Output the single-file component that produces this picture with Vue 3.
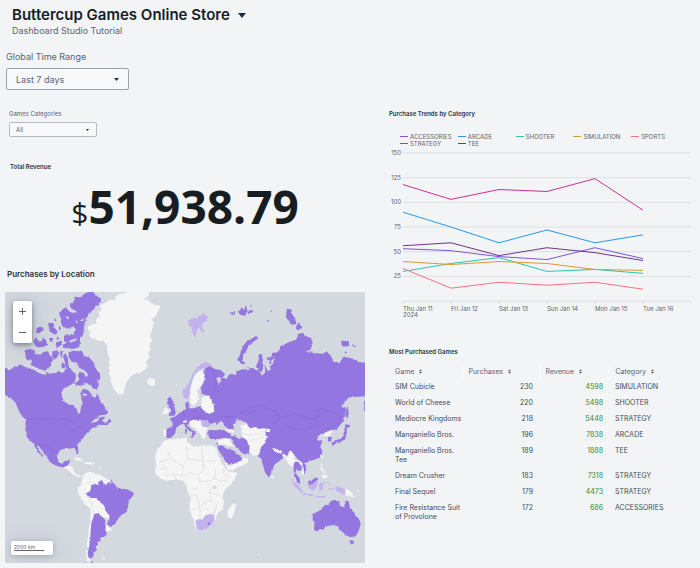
<script setup>
import { ref } from 'vue'

const timeRange = ref('Last 7 days')
const category = ref('All')

const days = ['Thu Jan 11', 'Fri Jan 12', 'Sat Jan 13', 'Sun Jan 14', 'Mon Jan 15', 'Tue Jan 16']
const ticks = [150, 125, 100, 75, 50, 25]
const series = [
  { name: 'ACCESSORIES', color: '#7b56db', values: [53, 51, 45, 42, 54, 43] },
  { name: 'ARCADE', color: '#2a97e8', values: [90, 75, 59, 72, 59, 67] },
  { name: 'SHOOTER', color: '#2cc7a6', values: [30, 38, 44, 30, 32, 28] },
  { name: 'SIMULATION', color: '#dc9a30', values: [40, 37, 40, 38, 32, 31] },
  { name: 'SPORTS', color: '#fa6f7f', values: [33, 13, 19, 16, 19, 12] },
  { name: 'STRATEGY', color: '#cb2e9a', values: [118, 103, 113, 111, 124, 92] },
  { name: 'TEE', color: '#73308c', values: [56, 59, 46, 54, 49, 41] }
]
const px = (i) => 14 + i * 48
const py = (v) => 152 - (v * 148) / 150
const line = (values) => values.map((v, i) => `${px(i)},${py(v)}`).join(' ')

const columns = ['Game', 'Purchases', 'Revenue', 'Category']
const games = [
  ['SIM Cubicle', 230, 4598, 'SIMULATION'],
  ['World of Cheese', 220, 5498, 'SHOOTER'],
  ['Mediocre Kingdoms', 218, 5448, 'STRATEGY'],
  ['Manganiello Bros.', 196, 7838, 'ARCADE'],
  ['Manganiello Bros. Tee', 189, 1888, 'TEE'],
  ['Dream Crusher', 183, 7318, 'STRATEGY'],
  ['Final Sequel', 179, 4473, 'STRATEGY'],
  ['Fire Resistance Suit of Provolone', 172, 686, 'ACCESSORIES']
]
</script>

<template>
  <div class="dashboard">
    <header class="head">
      <h1>
        Buttercup Games Online Store
        <button class="title-menu" aria-label="Switch dashboard">
          <svg viewBox="0 0 8 5"><path d="M0 0h8L4 5z" /></svg>
        </button>
      </h1>
      <p>Dashboard Studio Tutorial</p>
    </header>

    <div class="field">
      <label for="time-range">Global Time Range</label>
      <div class="select-box">
        <select id="time-range" v-model="timeRange">
          <option>Last 7 days</option>
        </select>
        <svg class="caret" viewBox="0 0 8 5"><path d="M0 0h8L4 5z" /></svg>
      </div>
    </div>

    <main class="columns">
      <div class="left">
        <div class="field small">
          <label for="category">Games Categories</label>
          <div class="select-box">
            <select id="category" v-model="category">
              <option>All</option>
            </select>
            <svg class="caret" viewBox="0 0 8 5"><path d="M0 0h8L4 5z" /></svg>
          </div>
        </div>

        <section class="revenue">
          <h2>Total Revenue</h2>
          <p class="amount"><span>$</span>51,938.79</p>
        </section>

        <section class="location">
          <h2>Purchases by Location</h2>
          <div class="map">
            <svg class="world" viewBox="0 0 1080 813" role="img" aria-label="World map of purchases">
              <defs>
                <filter id="coast" x="0" y="0" width="100%" height="100%" color-interpolation-filters="sRGB">
                  <feTurbulence type="fractalNoise" baseFrequency="0.12" numOctaves="2" seed="4" />
                  <feDisplacementMap in="SourceGraphic" scale="8" xChannelSelector="R" yChannelSelector="G" />
                </filter>
              </defs>
              <rect class="sea" width="1080" height="813" />
              <g filter="url(#coast)">
                <rect class="sea" x="-20" y="-20" width="1120" height="853" />
                <!-- North America and Greenland -->
                <g transform="translate(-15 -18)">
                  <path class="none" d="M300 57L318 50 326 42 344 43 348 30 362 24 385 18 398 10 445 10 448 22 444 32 432 42 446 42 453 52 468 54 482 62 474 75 466 92 454 98 462 112 456 135 450 150 455 163 448 178 452 190 444 202 450 213 437 228 444 240 430 254 418 260 400 264 386 280 378 292 373 316 365 328 353 323 342 308 333 290 331 272 326 262 330 248 326 230 329 215 323 200 320 180 312 166 290 162 272 155 266 144 275 140 262 128 268 118 292 112 284 104 300 90 296 78 306 70z" />
                  <path class="none" d="M440 284L450 276 464 280 474 278 479 288 468 297 456 301 446 294 440 291z" />
                  <path class="full" d="M-20 246L20 246 30 252 42 243 62 237 75 243 95 248 110 255 118 262 135 266 140 258 150 262 165 262 178 255 184 261 192 258 198 245 194 228 190 210 196 200 204 218 206 242 220 258 228 268 226 284 214 296 192 306 184 322 190 345 205 355 222 358 230 370 235 383 241 378 243 362 248 350 243 335 243 318 250 308 262 312 270 318 275 330 287 335 291 322 297 332 303 350 315 362 325 380 318 386 300 388 285 398 270 412 290 408 305 392 316 394 306 404 318 412 328 398 335 406 318 418 298 416 288 424 276 425 266 440 77 440 77 402 66 390 55 372 47 350 35 338 15 326 -20 322z" />
                  <path class="full" d="M205 200L214 194 236 195 248 198 252 210 266 214 280 228 285 244 303 268 298 284 291 278 297 295 290 312 280 306 272 297 262 292 254 292 240 300 228 300 222 290 238 282 233 268 240 256 250 262 258 272 264 264 252 252 238 246 232 230 216 228 206 216z" />
                  <path class="full" d="M258 20L280 17 290 30 304 38 300 50 290 58 280 72 268 80 258 100 252 120 250 145 240 160 238 183 222 188 190 186 188 176 200 170 192 162 192 150 202 145 220 148 228 130 220 122 202 128 188 122 182 108 184 98 178 86 184 72 198 64 206 76 220 82 232 78 218 70 206 60 222 44 224 32 240 34z" />
                  <path class="full" d="M76 192L92 188 108 196 98 212 88 224 77 218zM88 215L104 204 122 206 130 198 144 196 150 210 160 218 154 232 146 246 136 254 120 250 104 242 92 236 96 224zM158 196L170 192 178 200 172 214 162 222 156 210zM182 192L188 196 186 214 180 206zM186 228L196 236 194 248 184 244zM100 160L110 155 114 166 126 166 128 154 138 162 142 178 128 183 112 184 104 177zM148 156L160 156 158 168 149 166zM166 170L182 164 186 176 170 186zM110 126L128 120 130 132 118 142 108 140zM144 112L160 110 162 124 174 138 166 146 150 138zM164 95L170 104 164 106zM178 118L184 130 176 132zM172 150L178 160 170 162z" />
                  <path class="sea" d="M228 102L236 108 228 112zM196 90L208 94 202 100zM252 96L240 104 250 106zM208 164L232 156 228 164 210 170zM168 255L176 248 172 240zM248 322L262 325 258 330 248 328z" />
                  <path class="border" d="M77 398L205 398 226 410 235 424 255 418 280 400 300 394" />
                </g>
                <!-- United States, Mexico, Central and South America -->
                <g transform="translate(-15 402)">
                  <path class="full" d="M77 -10L290 -10 290 2 275 5 262 17 255 30 245 42 232 55 235 72 234 86 229 83 225 70 215 66 200 68 185 70 175 78 172 92 175 108 188 114 195 104 212 100 208 112 200 118 192 124 178 122 160 115 146 105 140 90 128 78 120 65 110 54 114 68 122 80 130 94 124 90 110 72 102 55 95 48 82 35 77 20z" />
                  <path class="border" d="M102 52L125 60 140 55 155 70 172 82M207 10L220 14 235 4 250 0" />
                  <path class="none" d="M192 124L204 119 218 122 220 136 230 146 240 148 244 154 234 152 218 144 206 134zM219 98L232 94 248 102 252 107 238 104zM254 109L270 108 286 112 276 116 256 114zM296 118L302 126 300 130z" />
                  <path class="none" d="M248 152L258 140 272 137 292 144 308 150 320 160 340 165 345 180 340 260 326 280 290 266 282 272 274 300 270 330 266 360 263 384 270 398 277 412 264 405 258 390 262 340 270 290 272 248 256 236 242 212 234 200 234 188 244 176z" />
                  <path class="full" d="M274 178L286 174 296 178 294 168 306 162 312 174 330 170 334 160 344 176 348 182 364 188 382 190 398 198 401 208 388 222 384 242 380 258 362 268 350 286 334 306 320 294 328 284 328 268 318 258 314 240 300 228 286 216 272 216 262 210 260 202 272 192z" />
                  <path class="full" d="M284 262L296 263 316 282 316 296 320 318 318 330 300 336 302 344 292 348 294 356 286 362 290 374 280 380 280 392 270 398 262 388 266 368 270 350 272 320 274 292zM272 402L281 412 274 412z" />
                  <path class="none" d="M318 296L334 308 328 316 316 314zM305 397L315 398 312 402z" />
                  <path class="edge" d="M270 150L268 168 290 172M255 190L250 200 270 222 274 240M276 225L280 262M338 166L328 174" />
                </g>
                <!-- Northern Eurasia -->
                <g transform="translate(525 -18)">
                  <path class="full" d="M80 242L92 240 100 248 122 252 135 264 130 276 114 274 106 280 116 294 124 286 120 278 132 276 140 280 145 268 158 262 168 268 170 256 188 250 206 252 216 246 228 252 240 254 242 268 250 268 256 256 254 240 262 216 274 212 278 200 296 198 302 180 330 168 350 160 354 144 366 140 376 150 394 156 398 170 392 190 378 198 400 200 430 204 440 196 454 212 460 228 480 228 492 212 520 218 535 228 590 234 590 330 530 332 508 334 498 344 484 360 498 368 496 390 486 410 470 430 410 440 215 440 200 410 172 400 150 436 120 400 60 390 70 370 90 330 66 320 62 305 72 288 76 270 70 255z" />
                  <path class="full" d="M228 150L236 156 222 166 208 176 200 192 190 206 188 222 194 234 184 234 172 222 180 206 184 188 196 170 212 160zM236 206L246 204 248 222 250 240 246 258 236 254 228 240 236 222zM196 240L218 248 232 262 220 254zM320 70L334 70 336 84 344 96 348 114 334 116 326 104 318 94zM352 108L366 122 364 130 348 130zM484 164L506 166 508 180 490 182 484 176zM516 174L530 180 522 184zM492 194L504 200 496 202zM552 346L590 340 590 384 554 380z" />
                  <path class="full" d="M150 80L166 78 162 88 152 84zM174 76L186 64 192 72 198 56 202 74 196 90 180 86zM206 74L220 72 218 80 204 82zM262 102h5v4h-5zM272 74h6v4h-6zM210 58h5v5h-5z" />
                  <path class="sea" d="M254 232L264 220 272 226 284 216 280 232 270 240 272 252 262 254z" />
                  <path class="full" d="M266 226L276 228 270 236z" />
                  <path class="some" d="M26 102L40 94 50 98 54 88 70 84 84 94 78 106 68 112 66 126 74 134 66 142 58 124 50 134 46 156 38 140 34 124 26 118z" />
                </g>
                <!-- Africa -->
                <g transform="translate(525 402)">
                  <path class="none" d="M-75 94L-68 72 -56 56 -42 40 0 36 20 34 22 48 36 60 56 64 72 56 94 60 108 64 114 88 124 108 134 124 142 136 170 140 166 156 150 178 134 192 128 210 132 230 128 250 112 262 110 274 100 290 76 310 56 314 46 304 42 284 32 262 28 236 34 216 22 194 20 180 10 164 -10 160 -40 164 -58 158 -75 140 -72 110z" />
                  <path class="none" d="M164 228L168 238 162 260 154 278 144 272 142 252 152 240z" />
                  <path class="edge" d="M-60 110L-30 96 -36 76M-30 96L8 120 24 100 20 56M24 100L68 104 66 64M68 104L72 132 54 148 30 140 8 152 -20 142 -40 150M68 104L110 104M108 124L104 158 124 166 144 162M54 148L60 168 90 164 104 158M34 190L60 186 62 166M32 206L50 206 56 230 60 244 44 248 30 248M60 244L78 226 92 222 90 200 88 172M90 200L112 206 128 214M92 222L110 234 106 260 92 262 76 246M60 244L60 276M-20 142L-10 160M8 120L6 152M-40 126L-60 128M-50 114L-40 126-42 150M134 126L128 140 150 156" />
                  <path class="some" d="M46 286L60 278 66 282 76 268 90 264 102 264 104 278 98 292 80 310 56 314 50 304z" />
                  <path class="full" d="M82 292L90 288 90 296 84 297z" />
                  <path class="sea" d="M98 178L110 180 108 190 98 190z" />
                </g>
                <!-- Europe and the Middle East -->
                <g transform="translate(450 207)">
                  <path class="sea" d="M0 -5L60 -5 80 70 80 100 138 100 140 160 200 175 222 206 236 212 160 236 152 250 130 244 112 252 98 240 96 230 60 234 30 238 0 190z" />
                  <path class="some" d="M82 90L90 80 102 66 112 42 122 22 138 8 152 4 168 8 172 16 150 20 130 28 120 40 112 62 108 80 104 104 98 114 86 110z" />
                  <path class="none" d="M106 118L104 96 108 74 114 54 126 36 140 28 150 44 144 62 134 80 126 92 132 104 126 122 116 136 108 130z" />
                  <path class="full" d="M148 26L162 16 176 22 186 60 176 96 158 104 140 98 140 82 152 68z" />
                  <path class="none" d="M142 108L160 104 168 116 176 134 178 152 160 160 144 152 138 136z" />
                  <path class="full" d="M36 112L48 108 54 122 60 142 66 156 58 164 40 164 48 152 44 140 38 130zM58 168L74 156 84 150 94 144 90 128 98 120 104 132 100 142 114 142 134 136 148 150 164 160 176 156 206 158 244 156 240 186 236 206 224 206 208 194 204 184 196 180 188 192 180 184 168 190 156 180 132 176 114 176 102 184 96 192 110 206 124 216 118 222 110 226 112 214 92 200 86 188 74 192 64 200 60 218 48 230 36 232 32 222 34 202 54 198 52 184 44 174 52 170z" />
                  <path class="none" d="M24 146L36 140 42 150 36 160 24 158zM26 204L34 204 34 226 27 226zM84 180L94 178 96 184 84 186zM108 178L136 178 152 196 158 206 152 216 152 230 142 232 136 218 122 204 106 192 102 184z" />
                  <path class="some" d="M136 180L154 178 168 188 162 198 144 198z" />
                  <path class="full" d="M90 204L96 204 96 216 90 220zM104 226L116 226 112 232zM76 214L82 214 80 218zM156 218L162 206 180 208 208 206 226 212 228 224 216 232 184 234 168 234z" />
                  <path class="none" d="M208 206L232 204 240 214 228 218zM188 238L206 232 222 232 228 246 238 258 226 256 206 250 194 254z" />
                  <path class="sea" d="M264 268L290 280 262 296 240 284z" />
                  <path class="full" d="M222 226L240 226 252 234 268 228 280 234 286 252 286 278 268 280 258 272 244 260 234 244z" />
                  <path class="full" d="M186 256L200 252 216 264 238 268 244 280 258 284 262 296 244 306 222 312 212 302 202 286 192 270zM186 246L190 246 188 256z" />
                  <path class="none" d="M212 304L228 314 246 304 262 298 264 286 278 292 280 304 262 314 232 328 216 326z" />
                  <path class="border" d="M84 150L88 168M116 146L120 168 148 170M60 198L46 196M200 166L240 168 256 154 280 158 300 150M172 20L180 50 178 90" />
                </g>
                <!-- South and East Asia -->
                <g transform="translate(690 297)">
                  <path class="full" d="M50 100L320 60 324 84 300 112 284 118 262 128 248 134 246 146 262 150 256 166 262 184 254 200 234 208 216 212 206 216 190 206 176 190 160 192 146 200 138 206 120 220 110 236 108 254 100 258 90 244 82 216 80 204 68 196 74 176 90 150z" />
                  <path class="none" d="M14 118L18 102 34 100 46 112 62 108 72 114 84 112 106 114 104 122 90 124 96 140 88 156 78 168 72 192 54 194 42 186 44 166 34 146 16 136z" />
                  <path class="sea" d="M-4 100L8 94 12 108 22 112 18 122 22 134 14 140 6 126 -4 116z" />
                  <path class="edge" d="M44 150L62 144 86 138M18 124L44 134 62 128 88 134M64 186L80 164" />
                  <path class="none" d="M110 170L124 176 142 182 140 188 120 182zM142 190L152 190 154 204 144 202zM108 252L116 256 116 264 110 262zM160 188L168 178 176 190 182 208 178 222 170 228 162 220 152 206zM184 206L194 210 208 226 216 236 206 252 198 248 202 238 194 226z" />
                  <path class="full" d="M176 218L188 212 200 226 200 238 188 240 184 232 182 246 194 262 196 280 186 272 180 256 176 240zM204 212L212 222 214 238 208 250 206 236 202 224zM216 206L222 210 218 216z" />
                  <path class="none" d="M262 132L280 122 292 118 292 124 282 134 276 138zM256 190L262 194 260 204 256 202zM258 216L266 222 262 232 270 244 264 246 256 234zM262 252L276 248 276 262 264 262z" />
                  <path class="full" d="M278 138L288 138 290 150 280 152zM290 156L300 148 316 144 322 136 328 122 328 112 334 108 336 124 330 144 316 154 300 158 292 166zM330 100L346 102 342 110 330 110zM336 44L342 60 338 84 332 74z" />
                  <path class="some" d="M164 262L178 272 196 288 204 304 196 302 178 286zM200 306L222 308 240 312 236 316 206 312zM242 314L272 316 272 320 244 319zM218 276L228 276 248 264 246 290 236 298 220 292zM252 282L258 276 272 274 262 284 266 300 258 294 254 304zM278 278L284 272 284 284zM280 292L296 292 294 296 282 296zM300 284L312 288 330 294 332 312 320 308 302 298z" />
                  <path class="full" d="M218 274L230 268 244 258 250 264 236 276 226 282z" />
                  <path class="none" d="M332 294L348 302 356 316 366 320 352 318 340 314 332 312zM362 298L370 296 372 304z" />
                  <path class="border" d="M-30 84L0 76 20 66 50 48 80 44 104 54 120 62 134 80 156 74 180 70 200 76 230 84 250 76 246 56 264 54 290 60 312 76 320 90M134 80L150 104 180 114 210 118 240 104 250 76M104 114L120 96 134 80" />
                </g>
                <!-- Oceania -->
                <g transform="translate(525 402)">
                  <path class="full" d="M398 264L410 258 424 252 430 240 446 234 452 226 464 222 478 226 478 238 492 246 498 222 506 228 510 246 520 254 526 268 538 280 542 294 536 314 528 330 512 334 496 328 488 316 478 312 474 300 456 298 440 300 428 310 408 316 402 308 404 292 398 282z" />
                  <path class="border" d="M400 278L420 284 450 294" />
                  <path class="full" d="M508 342L522 344 520 354 512 355z" />
                  <path class="none" d="M234 384h5v4h-5z" />
                </g>
              </g>
            </svg>
            <div class="zoom">
              <button aria-label="Zoom in"><svg viewBox="0 0 8 8"><path d="M4 0v8M0 4h8" /></svg></button>
              <button aria-label="Zoom out"><svg viewBox="0 0 8 8"><path d="M0 4h8" /></svg></button>
            </div>
            <div class="scale"><span>2000 km</span></div>
          </div>
        </section>
      </div>

      <div class="right">
        <section>
          <h2>Purchase Trends by Category</h2>
          <ul class="legend">
            <li v-for="s in series" :key="s.name">
              <i :style="{ background: s.color }"></i>{{ s.name }}
            </li>
          </ul>
          <svg class="chart" viewBox="0 0 302 172" role="img" aria-label="Purchase trends">
            <g v-for="t in ticks" :key="t">
              <line class="grid" x1="14" x2="302" :y1="py(t)" :y2="py(t)" />
              <text x="12" :y="py(t) + 2" text-anchor="end">{{ t }}</text>
            </g>
            <path class="grid" d="M14 152H302M14 152v3M62 152v3M110 152v3M158 152v3M206 152v3M254 152v3M302 152v3" />
            <text v-for="(d, i) in days" :key="d" :x="px(i)" y="162">{{ d }}</text>
            <text x="14" y="168">2024</text>
            <polyline v-for="s in series" :key="s.name" :points="line(s.values)" :stroke="s.color" />
          </svg>
        </section>

        <section class="games">
          <h2>Most Purchased Games</h2>
          <table>
            <thead>
              <tr>
                <th v-for="c in columns" :key="c">
                  {{ c }}
                  <svg viewBox="0 0 4 6"><path d="M2 0l2 2.500H0zM2 6l2-2.500H0z" /></svg>
                </th>
              </tr>
            </thead>
            <tbody>
              <tr v-for="g in games" :key="g[0]">
                <td>{{ g[0] }}</td>
                <td class="num">{{ g[1] }}</td>
                <td class="num money">{{ g[2] }}</td>
                <td>{{ g[3] }}</td>
              </tr>
            </tbody>
          </table>
        </section>
      </div>
    </main>
  </div>
</template>

<style>
body {
  margin: 0;
  background: #f2f4f6;
}
</style>

<style scoped>
.dashboard {
  padding: 5px 9px 5px 5px;
  font-family: Inter, 'Liberation Sans', sans-serif;
  color: #5c6370;
}
h1, h2, p, ul {
  margin: 0;
  padding: 0;
}
button {
  border: 0;
  padding: 0;
  background: none;
}
.head {
  padding-left: 7px;
}
h1 {
  display: flex;
  align-items: center;
  gap: 8px;
  font-size: 15px;
  line-height: 20px;
  font-weight: 600;
  color: #171d29;
}
.title-menu {
  display: flex;
}
.title-menu svg {
  width: 8px;
  height: 5px;
  fill: #1c2b3a;
}
.head p {
  font-size: 9px;
  line-height: 12px;
}
.field {
  margin-top: 14px;
  padding-left: 1px;
}
.field label {
  display: block;
  font-size: 9px;
  line-height: 12px;
}
.select-box {
  display: flex;
  align-items: center;
  width: 123px;
  margin-top: 5px;
}
select {
  appearance: none;
  width: 100%;
  height: 22px;
  padding: 0 9px;
  border: 1px solid #9ba3b1;
  border-radius: 2px;
  background: #f7f8fa;
  font-family: inherit;
  font-size: 9px;
  color: #5c6370;
}
.caret {
  width: 5px;
  height: 3px;
  margin-left: -15px;
  flex: none;
  fill: #1c2b3a;
  pointer-events: none;
}
.columns {
  display: grid;
  grid-template-columns: 360fr 302fr;
  gap: 24px;
  padding-top: 18px;
}
.small {
  margin-top: 2px;
  padding-left: 4px;
}
.small label {
  font-size: 6px;
  line-height: 8px;
}
.small .select-box {
  width: 88px;
  margin-top: 4px;
}
.small select {
  height: 15px;
  padding: 0 6px;
  border-color: #b5bac2;
  font-size: 6px;
}
.small .caret {
  width: 3px;
  height: 2px;
  margin-left: -11px;
}
h2 {
  font-size: 7px;
  line-height: 12px;
  font-weight: 600;
  color: #2c333f;
}
.right h2 {
  font-size: 6px;
}
.revenue {
  padding-top: 24px;
}
.revenue h2 {
  padding-left: 5px;
  font-size: 6px;
}
.amount {
  padding-top: 3px;
  text-align: center;
  font-family: 'Open Sans', sans-serif;
  font-size: 46px;
  line-height: 60px;
  font-weight: 700;
  color: #171d21;
}
.amount span {
  font-size: 30px;
  font-weight: 400;
}
.location {
  padding-top: 24px;
}
.location h2 {
  padding-left: 2px;
  font-size: 8px;
  line-height: 14px;
}
.map {
  position: relative;
  margin-top: 11px;
  overflow: hidden;
}
.world {
  display: block;
  width: 100%;
}
.sea { fill: #d4d9e0; }
.full { fill: #9476e0; }
.some { fill: #c3b3ec; }
.none { fill: #f5f5f6; }
.border, .edge {
  fill: none;
  stroke: #8569d4;
  stroke-width: 2;
}
.edge {
  stroke: #e1e3e6;
  stroke-width: 3;
}
.zoom {
  position: absolute;
  left: 8px;
  top: 9px;
  display: flex;
  flex-direction: column;
  border-radius: 2px;
  background: #fff;
  box-shadow: 0 2px 5px rgba(40, 50, 65, 0.5), 0 2px 24px rgba(40, 50, 65, 0.2);
}
.zoom button {
  display: flex;
  align-items: center;
  justify-content: center;
  width: 19px;
  height: 21px;
}
.zoom svg {
  width: 7px;
  height: 7px;
  fill: none;
  stroke: #4a505a;
}
.scale {
  position: absolute;
  left: 6px;
  bottom: 8px;
  width: 42px;
  padding: 3px 3px 4px;
  box-sizing: border-box;
  border-radius: 2px;
  background: #fff;
  box-shadow: 0 1px 5px rgba(40, 50, 65, 0.25), 0 2px 24px rgba(40, 50, 65, 0.15);
  font-size: 5px;
  line-height: 6px;
}
.scale span {
  display: block;
  width: 30px;
  border-bottom: 1px solid #5c6370;
}
.legend {
  display: grid;
  grid-template-columns: repeat(5, 1fr);
  padding: 13px 2px 0 11px;
  list-style: none;
  font-size: 6px;
  line-height: 7px;
}
.legend li {
  display: flex;
  align-items: center;
  gap: 2px;
  white-space: nowrap;
}
.legend i {
  width: 8px;
  height: 1px;
}
.chart {
  display: block;
  width: 100%;
  margin-top: 2px;
}
.chart text {
  font-size: 6px;
  fill: #5c6370;
}
.chart polyline {
  fill: none;
  stroke-width: 1;
}
.grid {
  fill: none;
  stroke: #dcdfe3;
  stroke-width: 1;
}
.games {
  padding-top: 25px;
}
table {
  width: 100%;
  margin-top: 6px;
  border-collapse: collapse;
  table-layout: fixed;
  font-size: 7px;
  line-height: 9px;
}
th {
  box-sizing: border-box;
  padding: 3px 6px;
  border-right: 1px solid #fafbfc;
  text-align: left;
  font-weight: 400;
}
th:nth-child(1) { width: 73px; }
th:nth-child(2) { width: 77px; }
th:nth-child(3) { width: 70px; }
th:last-child { border-right: 0; }
th svg {
  width: 3px;
  height: 5px;
  margin-left: 3px;
  fill: #5c6370;
}
td {
  padding: 3px 6px 4px;
  vertical-align: top;
  color: #454b57;
}
td:first-child {
  padding-right: 0;
}
.num {
  text-align: right;
}
.money {
  color: #2f8a3c;
}
</style>
